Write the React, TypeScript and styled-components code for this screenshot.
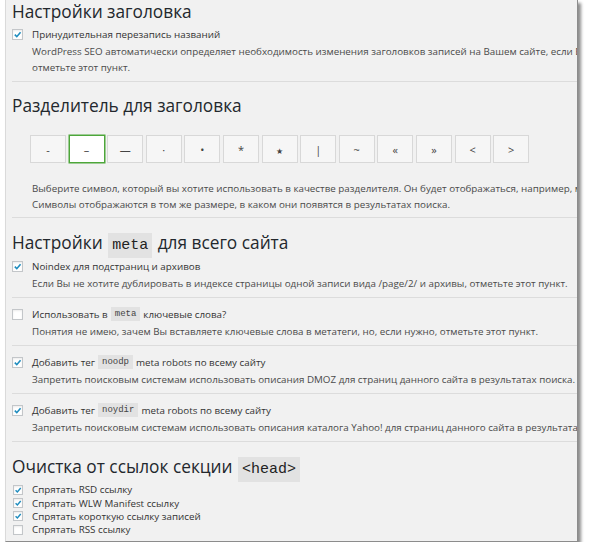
import React from "react";
import styled, { createGlobalStyle } from "styled-components";

const GlobalStyle = createGlobalStyle`
  html, body {
    margin: 0;
    padding: 0;
    background: #fff;
  }
  body {
    font-family: "Open Sans", "Liberation Sans", sans-serif;
  }
`;

const Panel = styled.div`
  box-sizing: border-box;
  margin-left: 5px;
  width: 573px;
  height: 542px;
  padding-left: 6px;
  background: #f1f1f1;
  border-left: 1px solid #dadada;
  border-right: 1px solid #8c8c8c;
  border-bottom: 1px solid #8c8c8c;
  box-shadow: 3px 3px 3px rgba(0, 0, 0, 0.45);
  overflow: hidden;
`;

const Inner = styled.div`
  width: 760px;
`;

const Heading = styled.h2<{ $top: number }>`
  margin: ${(p) => p.$top}px 0 0;
  height: 24px;
  font-size: 17.3px;
  line-height: 24px;
  font-weight: 400;
  color: #23282d;
  white-space: nowrap;
`;

const HeadCode = styled.code`
  padding: 4px 4px 4px;
  margin: 0 1px;
  line-height: 1;
  background: #e2e2e2;
  font-family: "Liberation Mono", "DejaVu Sans Mono", monospace;
  font-size: 15px;
  color: #222;
`;

const Code = styled.code`
  display: inline-block;
  line-height: 14px;
  padding: 0 4px;
  margin: 0 3px;
  background: #e2e2e2;
  font-family: "Liberation Mono", "DejaVu Sans Mono", monospace;
  font-size: 9px;
  color: #444;
`;

const Option = styled.div<{ $pt: number; $pb: number }>`
  padding: ${(p) => p.$pt}px 0 ${(p) => p.$pb}px;
  border-bottom: 1px solid #dcdcdc;
`;

const CheckRow = styled.label<{ $h: number }>`
  display: flex;
  align-items: center;
  height: ${(p) => p.$h}px;
  font-size: 9.8px;
  color: #333;
  white-space: nowrap;
`;

const Box = styled.span<{ $size: number }>`
  box-sizing: border-box;
  flex: none;
  display: flex;
  align-items: center;
  justify-content: center;
  width: ${(p) => p.$size}px;
  height: ${(p) => p.$size}px;
  margin-left: ${(p) => (p.$size < 11 ? 1 : 0)}px;
  margin-right: ${(p) => 20 - p.$size - (p.$size < 11 ? 1 : 0)}px;
  background: #fff;
  border: 1px solid #c3c6c9;
  box-shadow: inset 0 1px 2px rgba(0, 0, 0, 0.08);
`;

const Desc = styled.div<{ $top: number }>`
  margin-top: ${(p) => p.$top}px;
  padding-left: 20px;
  font-size: 9.8px;
  line-height: 16px;
  color: #4a4a4a;
  white-space: nowrap;
`;

const SepRow = styled.div`
  display: flex;
  gap: 2.6px;
  margin: 17px 0 0 18px;
`;

const SepButton = styled.div<{ $active?: boolean; $small?: boolean }>`
  box-sizing: border-box;
  width: 36px;
  height: 28px;
  display: flex;
  align-items: center;
  justify-content: center;
  background: ${(p) => (p.$active ? "#fff" : "#f6f6f6")};
  border: 1px solid ${(p) => (p.$active ? "#4da63a" : "#d8d8d8")};
  box-shadow: ${(p) => (p.$active ? "0 0 0 0.5px #4da63a" : "none")};
  font-family: "Open Sans", "DejaVu Sans", sans-serif;
  font-size: ${(p) => (p.$small ? "8px" : "11px")};
  padding-top: ${(p) => (p.$small ? "2px" : "0")};
  color: #444;
`;

const List = styled.div`
  margin-top: 4px;
`;

function Check({ checked, size }: { checked: boolean; size: number }) {
  return (
    <Box $size={size}>
      {checked && (
        <svg width={size - 2} height={size - 2} viewBox="0 0 10 10">
          <path
            d="M2 5.2 L4.2 7.4 L8.4 2.4"
            fill="none"
            stroke="#1e8cbe"
            strokeWidth="1.8"
          />
        </svg>
      )}
    </Box>
  );
}

const separators = ["-", "–", "—", "·", "•", "*", "★", "|", "~", "«", "»", "<", ">"];

const metaOptions = [
  {
    checked: false,
    label: (
      <>
        Использовать в <Code>meta</Code> ключевые слова?
      </>
    ),
    desc: "Понятия не имею, зачем Вы вставляете ключевые слова в метатеги, но, если нужно, отметьте этот пункт.",
  },
  {
    checked: true,
    label: (
      <>
        Добавить тег <Code>noodp</Code> meta robots по всему сайту
      </>
    ),
    desc: "Запретить поисковым системам использовать описания DMOZ для страниц данного сайта в результатах поиска.",
  },
  {
    checked: true,
    label: (
      <>
        Добавить тег <Code>noydir</Code> meta robots по всему сайту
      </>
    ),
    desc: "Запретить поисковым системам использовать описания каталога Yahoo! для страниц данного сайта в результатах поиска.",
  },
];

const headLinks = [
  { label: "Спрятать RSD ссылку", checked: true },
  { label: "Спрятать WLW Manifest ссылку", checked: true },
  { label: "Спрятать короткую ссылку записей", checked: true },
  { label: "Спрятать RSS ссылку", checked: false },
];

export default function App() {
  return (
    <>
      <GlobalStyle />
      <Panel>
        <Inner>
          {/* заголовки */}
          <Heading $top={0}>Настройки заголовка</Heading>
          <Option $pt={3} $pb={5}>
            <CheckRow $h={14}>
              <Check checked size={11} />
              Принудительная перезапись названий
            </CheckRow>
            <Desc $top={3}>
              WordPress SEO автоматически определяет необходимость изменения заголовков записей на Вашем сайте, если Вы заметили ошибки,
              <br />
              отметьте этот пункт.
            </Desc>
          </Option>

          {/* разделитель */}
          <Heading $top={12}>Разделитель для заголовка</Heading>
          <Option $pt={0} $pb={4}>
            <SepRow>
              {separators.map((s, i) => (
                <SepButton key={i} $active={i === 1} $small={s === "★"}>
                  {s}
                </SepButton>
              ))}
            </SepRow>
            <Desc $top={18}>
              Выберите символ, который вы хотите использовать в качестве разделителя. Он будет отображаться, например, между заголовком записи и названием сайта.
              <br />
              Символы отображаются в том же размере, в каком они появятся в результатах поиска.
            </Desc>
          </Option>

          {/* meta */}
          <Heading $top={13}>
            Настройки <HeadCode>meta</HeadCode> для всего сайта
          </Heading>
          <Option $pt={4} $pb={5}>
            <CheckRow $h={14}>
              <Check checked size={11} />
              Noindex для подстраниц и архивов
            </CheckRow>
            <Desc $top={3}>
              Если Вы не хотите дублировать в индексе страницы одной записи вида /page/2/ и архивы, отметьте этот пункт.
            </Desc>
          </Option>
          {metaOptions.map((o, i) => (
            <Option key={i} $pt={9} $pb={5}>
              <CheckRow $h={14}>
                <Check checked={o.checked} size={11} />
                {o.label}
              </CheckRow>
              <Desc $top={3}>{o.desc}</Desc>
            </Option>
          ))}

          {/* head */}
          <Heading $top={13}>
            Очистка от ссылок секции <HeadCode>&lt;head&gt;</HeadCode>
          </Heading>
          <List>
            {headLinks.map((l, i) => (
              <CheckRow key={i} $h={13.4}>
                <Check checked={l.checked} size={10} />
                {l.label}
              </CheckRow>
            ))}
          </List>
        </Inner>
      </Panel>
    </>
  );
}
